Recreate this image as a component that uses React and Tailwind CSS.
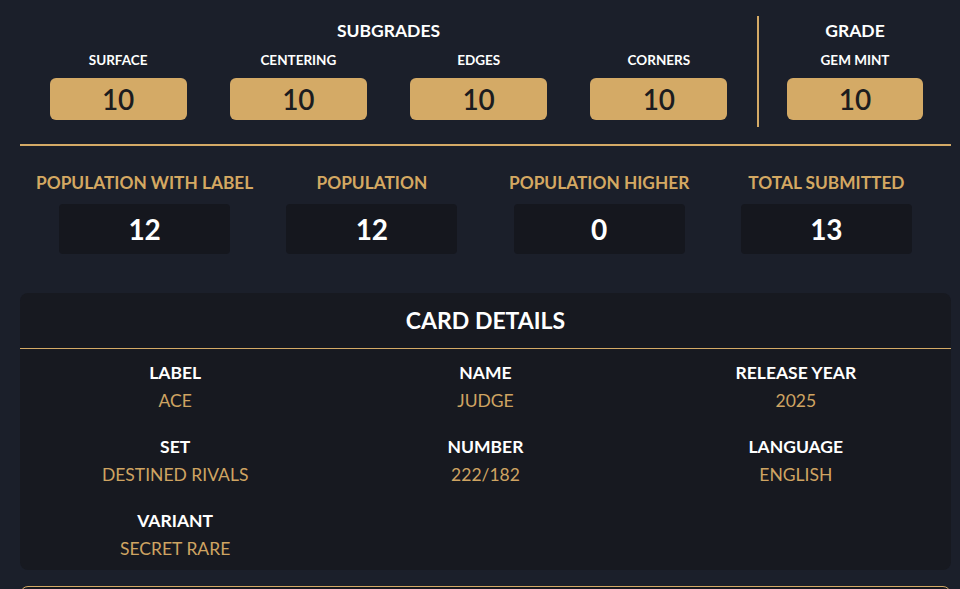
import React from "react";

const subgrades = [
  ["SURFACE", "10"],
  ["CENTERING", "10"],
  ["EDGES", "10"],
  ["CORNERS", "10"],
];

const pops = [
  ["POPULATION WITH LABEL", "12"],
  ["POPULATION", "12"],
  ["POPULATION HIGHER", "0"],
  ["TOTAL SUBMITTED", "13"],
];

const details = [
  ["LABEL", "ACE"],
  ["NAME", "JUDGE"],
  ["RELEASE YEAR", "2025"],
  ["SET", "DESTINED RIVALS"],
  ["NUMBER", "222/182"],
  ["LANGUAGE", "ENGLISH"],
  ["VARIANT", "SECRET RARE"],
];

export default function App() {
  return (
    <div
      className="h-[589px] w-[960px] overflow-hidden bg-[#1b1f2a] pl-[20px] pr-[9px] pt-[16px] text-white"
      style={{ fontFamily: "Lato, 'Noto Sans', sans-serif" }}
    >
      {/* Top grades */}
      <div className="flex">
        <div className="w-[737px] px-[8px]">
          <div className="mt-[4px] text-center text-[17.5px] font-bold leading-[22px]">SUBGRADES</div>
          <div className="mt-[10px] grid grid-cols-4">
            {subgrades.map(([l, v]) => (
              <div key={l} className="flex flex-col items-center">
                <div className="mb-[10px] text-[13.5px] font-bold leading-[16px]">{l}</div>
                <div className="flex h-[42px] w-[137px] items-center justify-center rounded-[6px] bg-[#d4aa66] text-[28px] font-semibold leading-none text-[#1c1c1e]">
                  {v}
                </div>
              </div>
            ))}
          </div>
        </div>
        <div className="h-[111px] w-[2px] bg-[#d4aa66]" />
        <div className="flex-1">
          <div className="mt-[4px] text-center text-[17.5px] font-bold leading-[22px]">GRADE</div>
          <div className="mt-[10px] flex flex-col items-center">
            <div className="mb-[10px] text-[13.5px] font-bold leading-[16px]">GEM MINT</div>
            <div className="flex h-[42px] w-[136px] items-center justify-center rounded-[6px] bg-[#d4aa66] text-[28px] font-semibold leading-none text-[#1c1c1e]">
              10
            </div>
          </div>
        </div>
      </div>

      <div className="mt-[17px] h-[2px] w-[931px] bg-[#d4aa66]" />

      {/* Population */}
      <div className="mt-[26px] grid grid-cols-4 px-[11px]">
        {pops.map(([l, v]) => (
          <div key={l} className="flex flex-col items-center">
            <div className="text-[17.3px] font-bold leading-[22px] text-[#d4a862]">{l}</div>
            <div className="mt-[10px] flex h-[50px] w-[171px] items-center justify-center rounded-[4px] bg-[#15171e] text-[28px] font-bold text-white">
              {v}
            </div>
          </div>
        ))}
      </div>

      {/* Card details */}
      <div className="mt-[39px] h-[277px] w-[931px] rounded-[8px] bg-[#171920]">
        <div className="flex h-[55px] items-center justify-center text-[23px] font-bold">CARD DETAILS</div>
        <div className="h-[1px] bg-[#d4aa66]" />
        <div className="grid grid-cols-3 gap-y-[23px] pt-[12px]">
          {details.map(([l, v]) => (
            <div key={l} className="flex flex-col items-center">
              <div className="text-[17.5px] font-bold leading-[24px] text-white">{l}</div>
              <div className="mt-[4px] text-[17.5px] leading-[23px] text-[#cfa462]">{v}</div>
            </div>
          ))}
        </div>
      </div>

      <div className="mt-[16px] h-[40px] w-[931px] rounded-[8px] border border-[#d4aa66] bg-[#171920]" />
    </div>
  );
}
